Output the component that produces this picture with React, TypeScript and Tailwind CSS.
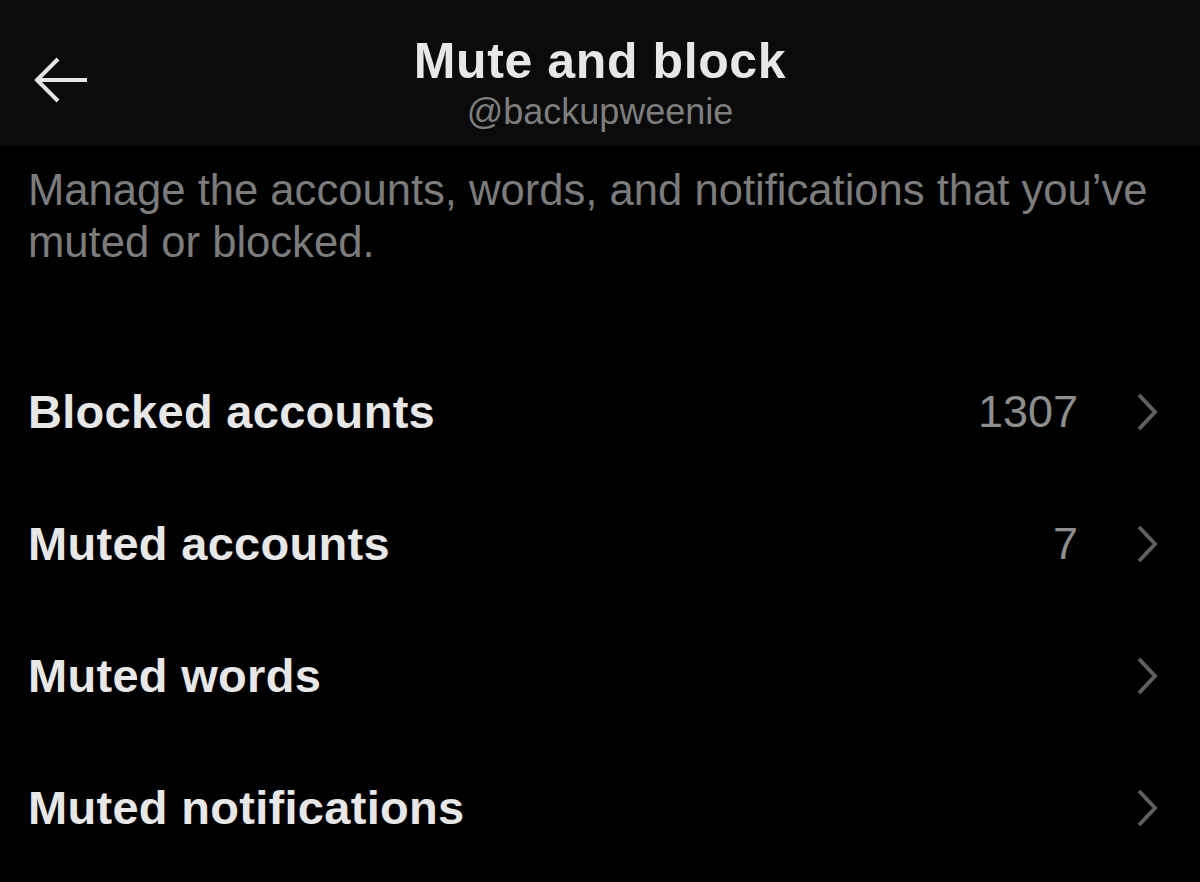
const rows = [
  { label: "Blocked accounts", count: "1307" },
  { label: "Muted accounts", count: "7" },
  { label: "Muted words", count: "" },
  { label: "Muted notifications", count: "" },
];

const BackArrow = () => (
  <svg width="60" height="50" viewBox="0 0 60 50" fill="none">
    <path
      d="M56 25H8M27 4L6 25L27 46"
      stroke="#e4e4e4"
      strokeWidth="4"
      strokeLinecap="butt"
      strokeLinejoin="miter"
    />
  </svg>
);

const Chevron = () => (
  <svg width="24" height="40" viewBox="0 0 24 40" fill="none">
    <path d="M3 3L19 20L3 37" stroke="#5f5f5f" strokeWidth="4" />
  </svg>
);

export default function App() {
  return (
    <div className="w-[1200px] h-[882px] bg-black overflow-hidden font-['Liberation_Sans',Arial,sans-serif]">
      <header className="relative h-[146px] bg-[#0b0b0b] flex flex-col items-center pt-[33px]">
        <button className="absolute left-[31px] top-[55px]">
          <BackArrow />
        </button>
        <h1 className="text-[50px] leading-[56px] font-bold text-[#e7e7e7] tracking-[0.6px]">
          Mute and block
        </h1>
        <p className="mt-[2px] text-[36px] leading-[42px] text-[#7e7e7e]">@backupweenie</p>
      </header>

      <p className="px-[28px] pt-[18px] text-[43.6px] leading-[52px] text-[#7c7c7c]">
        Manage the accounts, words, and notifications that you’ve muted or blocked.
      </p>

      <ul className="mt-[78px]">
        {rows.map((row) => (
          <li
            key={row.label}
            className="h-[132px] flex items-center justify-between pl-[28px] pr-[40px]"
          >
            <span className="text-[47px] font-bold text-[#e7e7e7] tracking-[0.3px]">
              {row.label}
            </span>
            <span className="flex items-center gap-[58px]">
              {row.count && (
                <span className="text-[45px] text-[#8e8e8e]">{row.count}</span>
              )}
              <Chevron />
            </span>
          </li>
        ))}
      </ul>
    </div>
  );
}
